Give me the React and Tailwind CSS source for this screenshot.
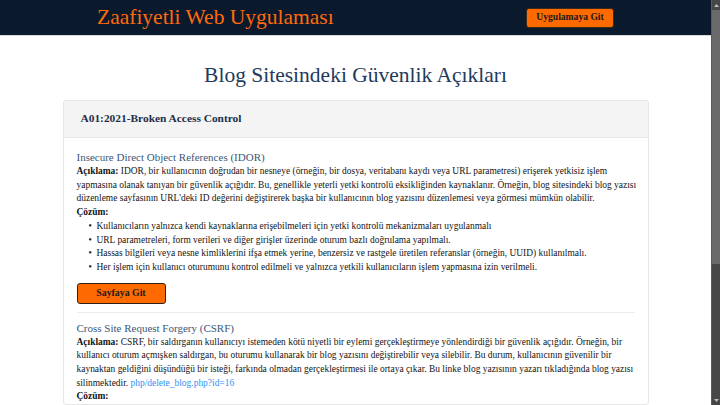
import React from "react";

const serif = { fontFamily: '"Liberation Serif", "DejaVu Serif", serif' };

function Line({ children }) {
  return <span className="block whitespace-nowrap">{children}</span>;
}

function Bullet({ children }) {
  return (
    <li className="flex whitespace-nowrap">
      <span className="w-[20px] shrink-0 pl-[12px]">•</span>
      <span>{children}</span>
    </li>
  );
}

export default function App() {
  return (
    <div className="flex h-[405px] w-[720px] overflow-hidden bg-white" style={serif}>
      <div className="min-w-0 flex-1 overflow-hidden">
        <header className="h-[36px] border-b border-[#dcdcdc] bg-[#0b192c]">
          <div className="mx-auto flex h-[35px] w-[517px] items-center justify-between">
            <span className="text-[21.5px] leading-none text-[#ff6a0d]">Zaafiyetli Web Uygulaması</span>
            <button className="h-[20px] w-[88px] rounded-[3px] border border-[#3a2a1a] bg-[#ff6a00] text-[9.6px] font-bold text-[#1a1a1a]">
              Uygulamaya Git
            </button>
          </div>
        </header>

        <h1 className="mt-[25px] text-center text-[21.5px] leading-[28px] text-[#1f3a5c]">
          Blog Sitesindeki Güvenlik Açıkları
        </h1>

        <div className="mx-auto mt-[11px] w-[586px] rounded-[3px] border border-[#e6e6e6]">
          <div className="flex h-[37px] items-center border-b border-[#e6e6e6] bg-[#f4f4f4] px-[17px] text-[11.4px] font-bold text-[#1c2e48]">
            A01:2021-Broken Access Control
          </div>
          <div className="px-[13px] pt-[11px] text-[9.45px] leading-[13.7px] text-[#141414]">
            <div className="text-[11px] leading-[16px] text-[#3a5878]">
              Insecure Direct Object References (IDOR)
            </div>
            <p>
              <Line>
                <b>Açıklama:</b> IDOR, bir kullanıcının doğrudan bir nesneye (örneğin, bir dosya, veritabanı kaydı veya URL parametresi) erişerek yetkisiz işlem
              </Line>
              <Line>
                yapmasına olanak tanıyan bir güvenlik açığıdır. Bu, genellikle yeterli yetki kontrolü eksikliğinden kaynaklanır. Örneğin, blog sitesindeki blog yazısı
              </Line>
              <Line>
                düzenleme sayfasının URL'deki ID değerini değiştirerek başka bir kullanıcının blog yazısını düzenlemesi veya görmesi mümkün olabilir.
              </Line>
            </p>
            <p className="font-bold">Çözüm:</p>
            <ul>
              <Bullet>Kullanıcıların yalnızca kendi kaynaklarına erişebilmeleri için yetki kontrolü mekanizmaları uygulanmalı</Bullet>
              <Bullet>URL parametreleri, form verileri ve diğer girişler üzerinde oturum bazlı doğrulama yapılmalı.</Bullet>
              <Bullet>Hassas bilgileri veya nesne kimliklerini ifşa etmek yerine, benzersiz ve rastgele üretilen referanslar (örneğin, UUID) kullanılmalı.</Bullet>
              <Bullet>Her işlem için kullanıcı oturumunu kontrol edilmeli ve yalnızca yetkili kullanıcıların işlem yapmasına izin verilmeli.</Bullet>
            </ul>
            <button className="mt-[8px] h-[21px] w-[89px] rounded-[3px] border border-[#2a2018] bg-[#ff6a00] text-[9.8px] font-bold text-[#1a1a1a]">
              Sayfaya Git
            </button>
            <div className="mt-[8px] h-px bg-[#ececec]" />
            <div className="mt-[7px] text-[11px] leading-[16px] text-[#3a5878]">
              Cross Site Request Forgery (CSRF)
            </div>
            <p>
              <Line>
                <b>Açıklama:</b> CSRF, bir saldırganın kullanıcıyı istemeden kötü niyetli bir eylemi gerçekleştirmeye yönlendirdiği bir güvenlik açığıdır. Örneğin, bir
              </Line>
              <Line>
                kullanıcı oturum açmışken saldırgan, bu oturumu kullanarak bir blog yazısını değiştirebilir veya silebilir. Bu durum, kullanıcının güvenilir bir
              </Line>
              <Line>
                kaynaktan geldiğini düşündüğü bir isteği, farkında olmadan gerçekleştirmesi ile ortaya çıkar. Bu linke blog yazısının yazarı tıkladığında blog yazısı
              </Line>
              <Line>
                silinmektedir. <a className="text-[#2f8ff5]">php/delete_blog.php?id=16</a>
              </Line>
            </p>
            <p className="font-bold">Çözüm:</p>
          </div>
        </div>
      </div>

      <div className="flex w-[9px] shrink-0 flex-col border-l border-[#5a5a5a] bg-[#464646]">
        <div className="flex h-[10px] items-center justify-center">
          <svg width="5" height="3" viewBox="0 0 5 3"><path d="M2.5 0L5 3H0z" fill="#bdbdbd" /></svg>
        </div>
        <div className="h-[254px] bg-[#6a6a6a]" />
        <div className="flex-1" />
        <div className="flex h-[10px] items-center justify-center">
          <svg width="5" height="3" viewBox="0 0 5 3"><path d="M0 0H5L2.5 3z" fill="#bdbdbd" /></svg>
        </div>
      </div>
    </div>
  );
}
